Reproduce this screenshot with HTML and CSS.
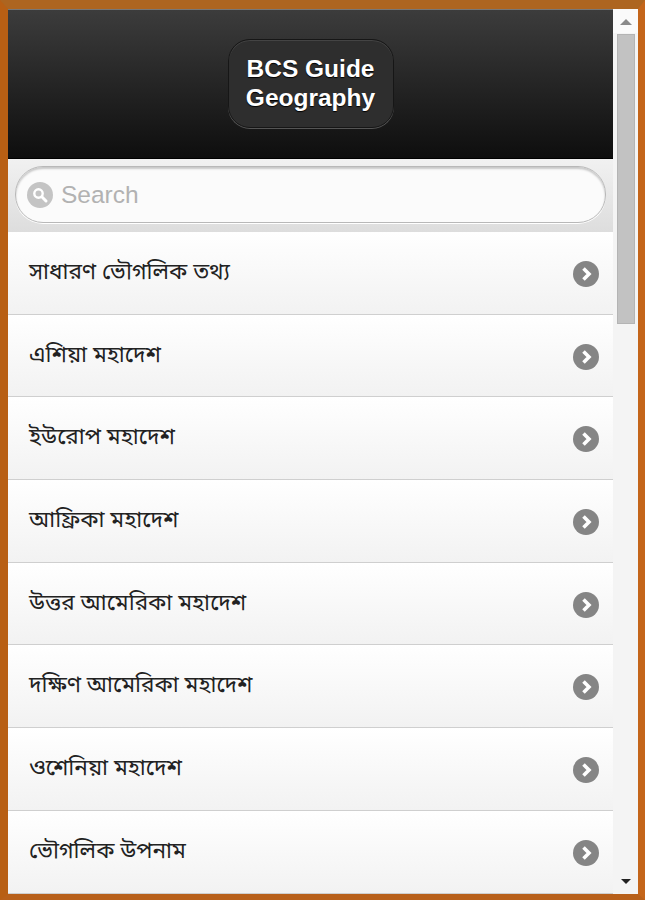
FILE: index.html
```html
<!DOCTYPE html>
<html lang="bn">
<head>
    <meta charset="UTF-8">
    <meta name="viewport" content="width=device-width, initial-scale=1.0">
    <title>BCS Guide Geography</title>
    <link rel="stylesheet" href="styles.css">
</head>
<body>
    <div class="window">
        <div class="page">
            <header class="header">
                <h1 class="title" lang="en">BCS Guide<br>Geography</h1>
            </header>

            <div class="search-bar">
                <div class="search-box">
                    <svg class="search-icon" viewBox="0 0 26 26" aria-hidden="true">
                        <circle cx="13" cy="13" r="13" fill="#c4c4c4"/>
                        <circle cx="11.5" cy="11.5" r="4.2" fill="none" stroke="#fff" stroke-width="2.4"/>
                        <path d="M14.8 14.8 L19 19" stroke="#fff" stroke-width="3" stroke-linecap="round"/>
                    </svg>
                    <span class="search-placeholder" lang="en">Search</span>
                </div>
            </div>

            <ul class="list">
                <li class="list-item"><span>সাধারণ ভৌগলিক তথ্য</span><svg class="arrow" viewBox="0 0 26 26" aria-hidden="true"><circle cx="13" cy="13" r="13"/><path d="M10.5 7.5 L16 13 L10.5 18.5"/></svg></li>
                <li class="list-item"><span>এশিয়া মহাদেশ</span><svg class="arrow" viewBox="0 0 26 26" aria-hidden="true"><circle cx="13" cy="13" r="13"/><path d="M10.5 7.5 L16 13 L10.5 18.5"/></svg></li>
                <li class="list-item"><span>ইউরোপ মহাদেশ</span><svg class="arrow" viewBox="0 0 26 26" aria-hidden="true"><circle cx="13" cy="13" r="13"/><path d="M10.5 7.5 L16 13 L10.5 18.5"/></svg></li>
                <li class="list-item"><span>আফ্রিকা মহাদেশ</span><svg class="arrow" viewBox="0 0 26 26" aria-hidden="true"><circle cx="13" cy="13" r="13"/><path d="M10.5 7.5 L16 13 L10.5 18.5"/></svg></li>
                <li class="list-item"><span>উত্তর আমেরিকা মহাদেশ</span><svg class="arrow" viewBox="0 0 26 26" aria-hidden="true"><circle cx="13" cy="13" r="13"/><path d="M10.5 7.5 L16 13 L10.5 18.5"/></svg></li>
                <li class="list-item"><span>দক্ষিণ আমেরিকা মহাদেশ</span><svg class="arrow" viewBox="0 0 26 26" aria-hidden="true"><circle cx="13" cy="13" r="13"/><path d="M10.5 7.5 L16 13 L10.5 18.5"/></svg></li>
                <li class="list-item"><span>ওশেনিয়া মহাদেশ</span><svg class="arrow" viewBox="0 0 26 26" aria-hidden="true"><circle cx="13" cy="13" r="13"/><path d="M10.5 7.5 L16 13 L10.5 18.5"/></svg></li>
                <li class="list-item"><span>ভৌগলিক উপনাম</span><svg class="arrow" viewBox="0 0 26 26" aria-hidden="true"><circle cx="13" cy="13" r="13"/><path d="M10.5 7.5 L16 13 L10.5 18.5"/></svg></li>
            </ul>
        </div>

        <div class="scrollbar">
            <div class="scroll-up"></div>
            <div class="scroll-thumb"></div>
            <div class="scroll-track"></div>
            <div class="scroll-down"></div>
        </div>
    </div>
</body>
</html>
```

FILE: styles.css
```css
html, body {
    margin: 0;
    height: 100%;
    overflow: hidden;
}

body {
    font-family: 'Liberation Sans', Arial, sans-serif;
    background: #f4f4f4;
}

.window {
    display: flex;
    height: 900px;
    box-sizing: border-box;
    border-style: solid;
    border-color: #ad6520 #c4651a #b8601a #b85f14;
    border-width: 9px 7px 6px 8px;
    background: #f4f4f4;
}

.page {
    width: 605px;
    overflow: hidden;
    flex-shrink: 0;
}

.header {
    height: 150px;
    display: flex;
    align-items: center;
    justify-content: center;
    box-sizing: border-box;
    padding-bottom: 2px;
    background: linear-gradient(#3c3c3c, #0e0e0e);
    border-top: 1px solid #777;
    border-bottom: 1px solid #000;
}

.title {
    margin: 0;
    width: 166px;
    height: 89px;
    display: flex;
    align-items: center;
    justify-content: center;
    box-sizing: border-box;
    padding-bottom: 1px;
    text-align: center;
    font-size: 24.5px;
    line-height: 29px;
    font-weight: bold;
    color: #fff;
    text-shadow: 0 1px 1px #000;
    background: #2e2e2e;
    border: 1px solid #161616;
    border-radius: 22px;
    box-shadow: 0 1px 0 #555, inset 0 1px 0 #444;
}

.search-bar {
    height: 73px;
    box-sizing: border-box;
    padding: 7px 7px 9px 7px;
    background: linear-gradient(#f1f1f1, #dddddd);
}

.search-box {
    height: 57px;
    display: flex;
    align-items: center;
    box-sizing: border-box;
    padding-left: 11px;
    background: #fbfbfb;
    border: 1px solid #b8b8b8;
    border-radius: 28px;
    box-shadow: inset 0 2px 2px #c8c8c8, 0 1px 0 #fff;
}

.search-icon {
    width: 26px;
    height: 26px;
}

.search-placeholder {
    margin-left: 8px;
    font-size: 24.5px;
    color: #b2b2b2;
}

.list {
    list-style: none;
    margin: 0;
    padding: 0;
}

.list-item {
    height: 82.7px;
    display: flex;
    align-items: center;
    justify-content: space-between;
    box-sizing: border-box;
    padding: 0 14px 0 21px;
    font-family: 'Noto Sans Bengali', 'Noto Sans', 'Liberation Serif', sans-serif;
    font-size: 22.6px;
    color: #222;
    background: linear-gradient(#ffffff, #f2f2f2);
    border-bottom: 1px solid #cfcfcf;
}

.arrow {
    width: 26px;
    height: 26px;
    margin-top: 2px;
    flex-shrink: 0;
}

.arrow circle {
    fill: #858585;
}

.arrow path {
    fill: none;
    stroke: #fff;
    stroke-width: 3.6;
}

.scrollbar {
    flex: 1;
    display: flex;
    flex-direction: column;
    align-items: center;
    background: #f4f4f4;
}

.scroll-up {
    width: 100%;
    height: 24px;
    flex-shrink: 0;
    box-sizing: border-box;
    background: #fafafa;
    position: relative;
}

.scroll-up::after {
    content: "";
    position: absolute;
    left: 7px;
    top: 10px;
    border-left: 6px solid transparent;
    border-right: 6px solid transparent;
    border-bottom: 6px solid #8a8a8a;
}

.scroll-thumb {
    width: 18px;
    height: 290px;
    margin-top: 1px;
    flex-shrink: 0;
    background: #c2c2c2;
    border: 1px solid #b4b4b4;
    box-sizing: border-box;
}

.scroll-track {
    flex: 1;
}

.scroll-down {
    width: 100%;
    height: 22px;
    flex-shrink: 0;
    position: relative;
}

.scroll-down::after {
    content: "";
    position: absolute;
    left: 8px;
    top: 7px;
    border-left: 5px solid transparent;
    border-right: 5px solid transparent;
    border-top: 5px solid #222;
}
```
